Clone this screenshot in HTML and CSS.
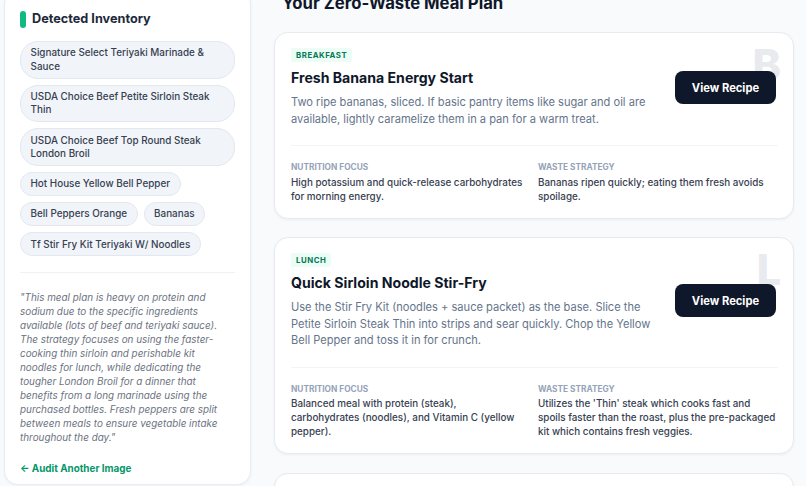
FILE: index.html
```html
<!DOCTYPE html>
<html lang="en">
<head>
<meta charset="utf-8">
<title>Zero-Waste Meal Plan</title>
<link rel="stylesheet" href="styles.css">
</head>
<body>
<div class="page">
  <aside class="inventory">
    <div class="inv-head">
      <span class="inv-bar"></span>
      <h2 class="inv-title">Detected Inventory</h2>
    </div>
    <div class="tags">
      <span class="tag">Signature Select Teriyaki Marinade &amp; Sauce</span>
      <span class="tag">USDA Choice Beef Petite Sirloin Steak Thin</span>
      <span class="tag">USDA Choice Beef Top Round Steak London Broil</span>
      <span class="tag">Hot House Yellow Bell Pepper</span>
      <span class="tag">Bell Peppers Orange</span>
      <span class="tag">Bananas</span>
      <span class="tag">Tf Stir Fry Kit Teriyaki W/ Noodles</span>
    </div>
    <hr class="inv-rule">
    <p class="quote">"This meal plan is heavy on protein and sodium due to the specific ingredients available (lots of beef and teriyaki sauce). The strategy focuses on using the faster-cooking thin sirloin and perishable kit noodles for lunch, while dedicating the tougher London Broil for a dinner that benefits from a long marinade using the purchased bottles. Fresh peppers are split between meals to ensure vegetable intake throughout the day."</p>
    <a class="back-link" href="#">← Audit Another Image</a>
  </aside>

  <main class="plan">
    <h1 class="plan-title">Your Zero-Waste Meal Plan</h1>

    <article class="meal">
      <span class="meal-letter">B</span>
      <div class="meal-top">
        <div class="meal-info">
          <span class="meal-tag">BREAKFAST</span>
          <h3 class="meal-name">Fresh Banana Energy Start</h3>
          <p class="meal-desc">Two ripe bananas, sliced. If basic pantry items like sugar and oil are available, lightly caramelize them in a pan for a warm treat.</p>
        </div>
        <button class="recipe-btn">View Recipe</button>
      </div>
      <div class="meal-facts">
        <div class="fact">
          <div class="fact-label">NUTRITION FOCUS</div>
          <div class="fact-text">High potassium and quick-release carbohydrates for morning energy.</div>
        </div>
        <div class="fact">
          <div class="fact-label">WASTE STRATEGY</div>
          <div class="fact-text">Bananas ripen quickly; eating them fresh avoids spoilage.</div>
        </div>
      </div>
    </article>

    <article class="meal">
      <span class="meal-letter">L</span>
      <div class="meal-top">
        <div class="meal-info">
          <span class="meal-tag">LUNCH</span>
          <h3 class="meal-name">Quick Sirloin Noodle Stir-Fry</h3>
          <p class="meal-desc">Use the Stir Fry Kit (noodles + sauce packet) as the base. Slice the Petite Sirloin Steak Thin into strips and sear quickly. Chop the Yellow Bell Pepper and toss it in for crunch.</p>
        </div>
        <button class="recipe-btn">View Recipe</button>
      </div>
      <div class="meal-facts">
        <div class="fact">
          <div class="fact-label">NUTRITION FOCUS</div>
          <div class="fact-text">Balanced meal with protein (steak), carbohydrates (noodles), and Vitamin C (yellow pepper).</div>
        </div>
        <div class="fact">
          <div class="fact-label">WASTE STRATEGY</div>
          <div class="fact-text">Utilizes the 'Thin' steak which cooks fast and spoils faster than the roast, plus the pre-packaged kit which contains fresh veggies.</div>
        </div>
      </div>
    </article>

    <article class="meal">
      <span class="meal-letter">D</span>
      <div class="meal-top">
        <div class="meal-info">
          <span class="meal-tag">DINNER</span>
          <h3 class="meal-name">Marinated London Broil with Peppers</h3>
          <p class="meal-desc">Marinate the Top Round London Broil in the Teriyaki Marinade for several hours, then grill or broil. Serve with sliced Orange Bell Peppers.</p>
        </div>
        <button class="recipe-btn">View Recipe</button>
      </div>
    </article>
  </main>
</div>
</body>
</html>
```

FILE: styles.css
```css
* { box-sizing: border-box; }

html, body {
  margin: 0;
  padding: 0;
  background: #f8fafc;
  font-family: Inter, "Noto Sans", "Liberation Sans", sans-serif;
  color: #1e293b;
}

.page {
  display: flex;
  align-items: flex-start;
  gap: 23px;
  padding: 0 15px 0 4px;
  margin-top: -10px;
}

/* ---------- Sidebar ---------- */
.inventory {
  flex: 0 0 247px;
  background: #fff;
  border: 1px solid #e8edf3;
  border-radius: 14px;
  padding: 17px 15px 8px;
  box-shadow: 0 1px 3px rgba(15, 23, 42, 0.05);
}

.inv-head {
  display: flex;
  align-items: center;
  gap: 6px;
  height: 22px;
  margin-bottom: 11px;
}

.inv-bar {
  width: 6px;
  height: 17px;
  border-radius: 3px;
  background: #10b981;
}

.inv-title {
  margin: 0;
  font-size: 12.7px;
  font-weight: 700;
  color: #1e293b;
  line-height: 22px;
}

.tags {
  display: flex;
  flex-wrap: wrap;
  gap: 6px;
}

.tag {
  background: #f1f5f9;
  border: 1px solid #e2e8f0;
  border-radius: 18px;
  padding: 4.4px 9.5px;
  font-size: 9.9px;
  line-height: 13.4px;
  font-weight: 500;
  color: #374151;
}

.inv-rule {
  border: 0;
  border-top: 1px solid #eef1f5;
  margin: 16px 0 17px;
}

.quote {
  margin: 0 0 17px;
  padding-right: 10px;
  font-size: 9.9px;
  line-height: 14px;
  font-style: italic;
  color: #6b7280;
}

.back-link {
  display: block;
  font-size: 9.9px;
  line-height: 15px;
  font-weight: 700;
  color: #059669;
  text-decoration: none;
}

/* ---------- Plan ---------- */
.plan {
  flex: 0 0 517px;
}

.plan-title {
  margin: 3px 0 19px;
  padding-left: 8px;
  font-size: 16.7px;
  line-height: 20px;
  font-weight: 700;
  color: #0f172a;
}

.meal {
  position: relative;
  background: #fff;
  border: 1px solid #e6ebf1;
  border-radius: 14px;
  padding: 15px 15px 15px 16px;
  margin-bottom: 18.5px;
  box-shadow: 0 1px 3px rgba(15, 23, 42, 0.05);
}

.meal-letter {
  position: absolute;
  top: 10px;
  right: 12px;
  font-size: 43px;
  line-height: 1;
  font-weight: 800;
  color: #e8eaee;
}

.meal-top {
  position: relative;
  display: flex;
  align-items: center;
  gap: 14px;
  padding-bottom: 18px;
  border-bottom: 1px solid #f1f4f8;
}

.meal-info {
  flex: 0 0 370px;
  display: flex;
  flex-direction: column;
  align-items: flex-start;
}

.meal-tag {
  display: block;
  height: 14px;
  line-height: 14px;
  padding: 0 5px;
  background: #ecfdf5;
  color: #047857;
  font-size: 7.8px;
  font-weight: 700;
  letter-spacing: 0.55px;
  border-radius: 2px;
}

.meal-name {
  margin: 6px 0 6px;
  font-size: 14.1px;
  line-height: 20px;
  font-weight: 700;
  color: #0f172a;
}

.meal-desc {
  margin: 0;
  font-size: 11.1px;
  line-height: 16.5px;
  color: #64748b;
}

.recipe-btn {
  position: relative;
  z-index: 1;
  margin-left: auto;
  margin-right: 2px;
  width: 101px;
  height: 33px;
  border: 0;
  border-radius: 8px;
  background: #0f172a;
  color: #fff;
  font-family: inherit;
  font-size: 11.2px;
  font-weight: 700;
  cursor: pointer;
}

.meal-facts {
  display: grid;
  grid-template-columns: 233px 1fr;
  gap: 14px;
  padding: 16px 1px 0 0;
}

.fact-label {
  font-size: 8.3px;
  line-height: 11px;
  font-weight: 700;
  color: #94a3b8;
  margin-bottom: 1.5px;
}

.fact-text {
  font-size: 9.85px;
  line-height: 14px;
  font-weight: 500;
  color: #374151;
}
```
